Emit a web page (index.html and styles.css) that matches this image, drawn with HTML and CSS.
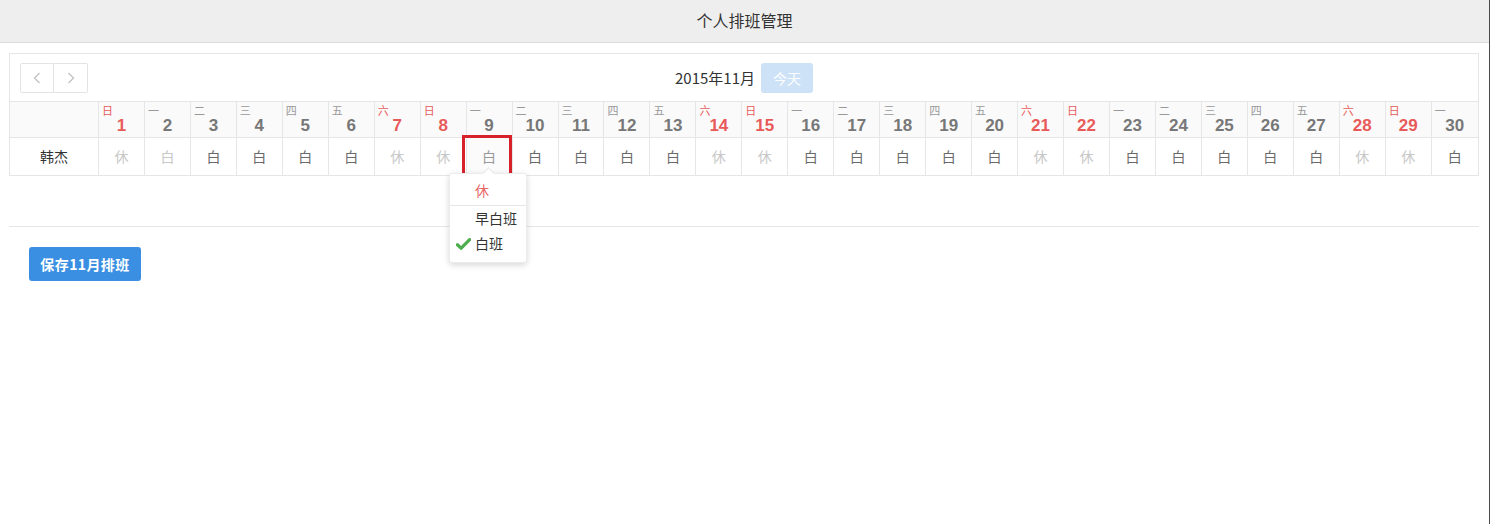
FILE: index.html
```html
<!DOCTYPE html>
<html lang="zh">
<head>
<meta charset="utf-8">
<title>个人排班管理</title>
<link rel="stylesheet" href="styles.css">
</head>
<body>
<div class="page">
  <header class="topbar">个人排班管理</header>
  <section class="calendar">
    <div class="toolbar">
      <div class="nav">
        <button class="nav-btn" aria-label="prev"><svg width="8" height="12" viewBox="0 0 8 12"><path d="M6.5 1 L1.5 6 L6.5 11" fill="none" stroke="#c4c4c4" stroke-width="1.4"/></svg></button>
        <button class="nav-btn" aria-label="next"><svg width="8" height="12" viewBox="0 0 8 12"><path d="M1.5 1 L6.5 6 L1.5 11" fill="none" stroke="#c4c4c4" stroke-width="1.4"/></svg></button>
      </div>
      <div class="month">
        <span class="month-title">2015年11月</span>
        <button class="today">今天</button>
      </div>
      <div></div>
    </div>
    <div class="grid" id="grid"></div>
    <div class="highlight"></div>
    <div class="popup">
      <div class="popup-arrow"></div>
      <div class="opt opt-rest">休</div>
      <div class="opt-list">
        <div class="opt">早白班</div>
        <div class="opt"><svg class="check" width="15" height="12" viewBox="0 0 15 12"><path d="M1.4 6.8 L5.2 10.2 L13.6 1.6" fill="none" stroke="#4cae4c" stroke-width="3.2" stroke-linecap="round" stroke-linejoin="round"/></svg>白班</div>
      </div>
    </div>
  </section>
  <hr class="divider">
  <div class="actions">
    <button class="save">保存11月排班</button>
  </div>
</div>
<script>
(function(){
  var wk = ['日','一','二','三','四','五','六'];
  var shifts = {7:1,8:1,14:1,15:1,21:1,22:1,28:1,29:1,1:1};
  var g = document.getElementById('grid');
  var h = '<div class="hcell name-h"></div>';
  for (var d=1; d<=30; d++){
    var w = (d-1)%7;
    var we = (w===0||w===6) ? ' weekend' : '';
    h += '<div class="hcell day-h'+we+'"><span class="wd">'+wk[w]+'</span><span class="dn">'+d+'</span></div>';
  }
  h += '<div class="bcell name">韩杰</div>';
  for (var d=1; d<=30; d++){
    var rest = shifts[d];
    var cls = rest ? ' rest' : (d===2 ? ' past' : '');
    if (d===9) cls += ' selected';
    h += '<div class="bcell'+cls+'">'+(rest?'休':'白')+'</div>';
  }
  g.innerHTML = h;
})();
</script>
</body>
</html>
```

FILE: styles.css
```css
* { box-sizing: border-box; }
html, body { margin: 0; padding: 0; background: #fff; }
body {
  font-family: "Noto Sans CJK SC", "Noto Sans", sans-serif;
  font-size: 14px;
  color: #333;
  height: 524px;
  border-right: 1px solid #4a4a4a;
}
.page { width: 1489px; }
.topbar {
  height: 43px;
  background: #eeeeee;
  border-bottom: 1px solid #dcdcdc;
  text-align: center;
  font-size: 16px;
  line-height: 41px;
  color: #333;
}
.calendar {
  position: relative;
  margin: 10px 11px 0 9px;
  width: 1470px;
  border: 1px solid #e6e6e6;
}
.toolbar {
  display: grid;
  grid-template-columns: 1fr auto 1fr;
  align-items: center;
  height: 47px;
  padding: 0 10px;
}
.nav { display: flex; }
.nav-btn {
  width: 34px;
  height: 30px;
  border: 1px solid #e3e3e3;
  background: #fff;
  padding: 0;
  display: flex;
  align-items: center;
  justify-content: center;
  margin: 0;
}
.nav-btn + .nav-btn { border-left: none; width: 34px; }
.nav-btn:first-child { border-radius: 2px 0 0 2px; }
.nav-btn:last-child { border-radius: 0 2px 2px 0; }
.month { display: flex; align-items: center; gap: 6px; }
.month-title { font-size: 15px; color: #333; }
.today {
  width: 52px;
  height: 30px;
  border: none;
  border-radius: 3px;
  background: #cde2f7;
  color: #fff;
  font-family: inherit;
  font-size: 14px;
  padding: 0;
}
.grid {
  display: grid;
  grid-template-columns: 88px repeat(29, 45.96px) 1fr;
  grid-template-rows: 37px 37px;
}
.hcell {
  background: #fafafa;
  border-top: 1px solid #e6e6e6;
  border-bottom: 1px solid #e6e6e6;
  position: relative;
}
.day-h { border-left: 1px solid #e6e6e6; color: #777; }
.wd {
  position: absolute;
  left: 3px;
  top: 2px;
  font-size: 11px;
  line-height: 12px;
  color: #999;
}
.dn {
  display: block;
  text-align: center;
  font-family: "Liberation Sans", Arial, sans-serif;
  font-weight: bold;
  font-size: 17px;
  line-height: 17px;
  padding-top: 15px;
  color: #777;
}
.weekend .wd, .weekend .dn { color: #e85a5a; }
.bcell {
  border-left: 1px solid #e6e6e6;
  text-align: center;
  line-height: 36px;
  color: #6a6a6a;
  font-size: 14px;
}
.bcell.name { border-left: none; color: #333; }
.bcell.rest, .bcell.past { color: #c8c8c8; }
.bcell.selected { color: #999; background: #fbfbfb; }
.highlight {
  position: absolute;
  left: 452px;
  top: 81px;
  width: 50px;
  height: 46px;
  border: 3px solid #d8222b;
  pointer-events: none;
}
.popup {
  position: absolute;
  left: 439px;
  top: 119px;
  width: 78px;
  height: 90px;
  background: #fff;
  border: 1px solid #ececec;
  border-radius: 3px;
  box-shadow: 0 2px 6px rgba(0,0,0,0.16);
  z-index: 2;
}
.popup-arrow {
  position: absolute;
  left: 34px;
  top: -5px;
  width: 9px;
  height: 9px;
  background: #fff;
  border-left: 1px solid #e6e6e6;
  border-top: 1px solid #e6e6e6;
  transform: rotate(45deg);
}
.opt {
  position: relative;
  padding-left: 25px;
  height: 25px;
  line-height: 25px;
  font-size: 14px;
  color: #333;
}
.opt-rest {
  height: 32px;
  line-height: 32px;
  color: #e76868;
  border-bottom: 1px solid #e6e6e6;
}
.check { position: absolute; left: 6px; top: 7px; }
.divider {
  margin: 50px 11px 0 9px;
  width: 1470px;
  height: 0;
  border: none;
  border-top: 1px solid #e6e6e6;
}
.actions { padding: 20px 0 0 29px; }
.save {
  width: 112px;
  height: 34px;
  border: none;
  border-radius: 3px;
  background: #3a8fe2;
  color: #fff;
  font-family: inherit;
  font-weight: bold;
  font-size: 14px;
  letter-spacing: 0.4px;
  padding: 0;
}
```
